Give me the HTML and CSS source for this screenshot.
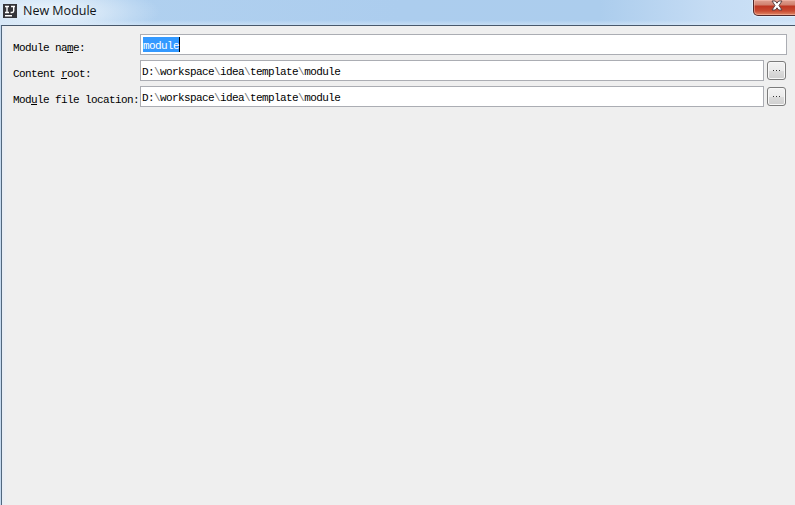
FILE: index.html
```html
<!DOCTYPE html>
<html lang="en">
<head>
<meta charset="utf-8">
<title>New Module</title>
<link rel="stylesheet" href="styles.css">
</head>
<body>
<div class="window">
  <header class="titlebar">
    <svg class="logo" width="14" height="14" viewBox="0 0 14 14">
      <rect width="14" height="14" fill="#35353a"/>
      <path d="M2 2.5h4M4 2.5v6M2 8.5h4M8 2.5h4M10.7 2.5v4.3q0 1.7-1.6 1.7H7.6M2 11.8h7" fill="none" stroke="#fff" stroke-width="1.4"/>
    </svg>
    <h1 class="title">New Module</h1>
    <button class="close" aria-label="Close">
      <svg width="12" height="11" viewBox="0 0 12 11">
        <path d="M1 1h3.3L6 3.2 7.7 1H11L8 5.5l3 4.5H7.7L6 7.8 4.3 10H1l3-4.5z" fill="#fff" stroke="#5b4244" stroke-width="1"/>
      </svg>
    </button>
  </header>
  <main class="content">
    <div class="row">
      <span class="label">Module na<u>m</u>e:</span>
      <div class="field"><span class="selected">module</span></div>
    </div>
    <div class="row">
      <span class="label">Content <u>r</u>oot:</span>
      <div class="field">D:<i>\</i>workspace<i>\</i>idea<i>\</i>template<i>\</i>module</div>
      <button class="browse" aria-label="Browse"><b></b><b></b><b></b></button>
    </div>
    <div class="row">
      <span class="label">Mod<u>u</u>le file location:</span>
      <div class="field">D:<i>\</i>workspace<i>\</i>idea<i>\</i>template<i>\</i>module</div>
      <button class="browse" aria-label="Browse"><b></b><b></b><b></b></button>
    </div>
  </main>
</div>
</body>
</html>
```
FILE: styles.css
```css
* { box-sizing: border-box; }

body { margin: 0; overflow: hidden; }

.window {
  display: flex;
  flex-direction: column;
  height: 505px;
  background: #c3d8ee;
}

.titlebar {
  display: flex;
  align-items: flex-start;
  height: 25px;
  padding-left: 3px;
  background:
    linear-gradient(to bottom, transparent 20px, rgba(225, 238, 250, .5) 25px),
    radial-gradient(ellipse 110px 28px at 50px 12px, rgba(235, 244, 252, .9) 15%, rgba(225, 238, 250, 0) 100%),
    linear-gradient(to right, #c2daf1 0, #b0d0ef 130px, #accdee 400px, #accded 600px, #c5dcf4 710px, #cde2f7 795px);
}

.logo { margin-top: 4px; }

.title {
  flex: 1;
  margin: 0 0 0 6px;
  font: 400 12.5px/21px "Open Sans", "Noto Sans", sans-serif;
  color: #101418;
}

.close {
  display: flex;
  justify-content: center;
  width: 49px;
  height: 16px;
  margin-right: -7px;
  padding: 0 1px 0 0;
  border: 1px solid #51282b;
  border-top: 0;
  border-radius: 0 0 5px 5px;
  background: linear-gradient(#dfa092 0, #d0806e 5px, #bd3522 6px, #c94b32 11px, #e08a69 15px);
  box-shadow: inset 0 0 0 1px rgba(255, 205, 190, .45), 0 0 1px 1px rgba(235, 245, 253, .7);
}

.content {
  display: flex;
  flex: 1;
  flex-direction: column;
  gap: 5px;
  margin-left: 1px;
  padding: 8px 8px 0 11px;
  border-top: 1px solid #48586b;
  border-left: 1px solid #52687e;
  background: linear-gradient(to right, #e7edf5 0, #efefef 5px);
  font: 11px/12px "Liberation Mono", monospace;
  letter-spacing: -.6px;
  color: #000;
}

.row { display: flex; height: 21px; }

.label {
  width: 127px;
  padding-top: 8px;
  white-space: nowrap;
}

.label u { text-underline-offset: 1px; }

.field {
  flex: 1;
  height: 21px;
  padding: 5px 0 0 1px;
  border: 1px solid #abadb3;
  background: #fff;
  white-space: nowrap;
}

.field i { font-style: normal; color: #777; }

.selected {
  display: inline-block;
  height: 15px;
  margin: -3px 0 0 1px;
  padding-top: 3px;
  border-right: 1px solid #000;
  background: #3399ff;
  color: #fff;
}

.browse {
  display: flex;
  align-items: center;
  justify-content: center;
  gap: 2px;
  width: 19px;
  height: 19px;
  margin: 1px 1px 0 3px;
  padding: 0;
  border: 1px solid #7c7c7c;
  border-radius: 3px;
  background: linear-gradient(#f3f3f3 0, #ebebeb 50%, #dcdcdc 51%, #cfcfcf 100%);
  box-shadow: inset 0 0 0 1px #f8f8f8;
}

.browse b { width: 1px; height: 1px; background: #333; }
```
